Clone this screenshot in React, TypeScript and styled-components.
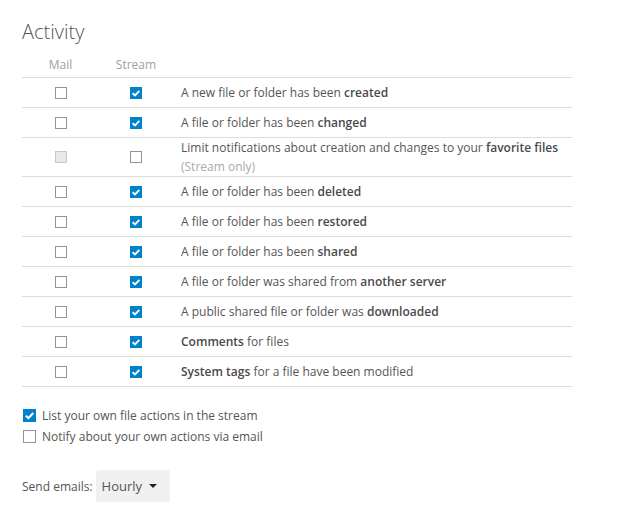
import React from 'react';
import styled, { createGlobalStyle } from 'styled-components';

const GlobalStyle = createGlobalStyle`
  html, body {
    margin: 0;
    padding: 0;
    background: #fff;
  }
  body {
    font-family: 'Open Sans', 'Noto Sans', sans-serif;
    font-size: 12px;
    color: #555;
  }
`;

type Setting = {
  before?: string;
  bold: string;
  after?: string;
  mail: 'off' | 'disabled';
  stream: boolean;
  note?: string;
};

const settings: Setting[] = [
  { before: 'A new file or folder has been ', bold: 'created', mail: 'off', stream: true },
  { before: 'A file or folder has been ', bold: 'changed', mail: 'off', stream: true },
  {
    before: 'Limit notifications about creation and changes to your ',
    bold: 'favorite files',
    mail: 'disabled',
    stream: false,
    note: '(Stream only)',
  },
  { before: 'A file or folder has been ', bold: 'deleted', mail: 'off', stream: true },
  { before: 'A file or folder has been ', bold: 'restored', mail: 'off', stream: true },
  { before: 'A file or folder has been ', bold: 'shared', mail: 'off', stream: true },
  { before: 'A file or folder was shared from ', bold: 'another server', mail: 'off', stream: true },
  { before: 'A public shared file or folder was ', bold: 'downloaded', mail: 'off', stream: true },
  { bold: 'Comments', after: ' for files', mail: 'off', stream: true },
  { bold: 'System tags', after: ' for a file have been modified', mail: 'off', stream: true },
];

const Check: React.FC<{ checked?: boolean; disabled?: boolean; size?: number }> = ({
  checked,
  disabled,
  size = 12,
}) => (
  <Box $checked={checked} $disabled={disabled} $size={size}>
    {checked && (
      <svg width={size - 2} height={size - 2} viewBox="0 0 10 10">
        <path d="M1.6 5.2 L4 7.4 L8.4 2.8" fill="none" stroke="#fff" strokeWidth="1.9" />
      </svg>
    )}
  </Box>
);

const App: React.FC = () => {
  return (
    <>
      <GlobalStyle />
      <Section>
        <Title>Activity</Title>
        <Table>
          <HeadRow>
            <HeadCell>Mail</HeadCell>
            <HeadCell>Stream</HeadCell>
            <span />
          </HeadRow>
          {settings.map((s, i) => (
            <Row key={i}>
              <BoxCell>
                <Check disabled={s.mail === 'disabled'} />
              </BoxCell>
              <BoxCell>
                <Check checked={s.stream} />
              </BoxCell>
              <TextCell $tall={!!s.note}>
                <Line>
                  {s.before}
                  <Strong>{s.bold}</Strong>
                  {s.after}
                </Line>
                {s.note && <Note>{s.note}</Note>}
              </TextCell>
            </Row>
          ))}
        </Table>

        <Options>
          <Option>
            <Check checked size={13} />
            List your own file actions in the stream
          </Option>
          <Option>
            <Check size={13} />
            Notify about your own actions via email
          </Option>
        </Options>

        <SendRow>
          <span>Send emails:</span>
          <Select>
            Hourly
            <Caret />
          </Select>
        </SendRow>
      </Section>
    </>
  );
};

const Section = styled.section`
  padding: 18px 22px 20px;
  width: 550px;
`;

const Title = styled.h2`
  margin: 0 0 11px;
  font-size: 20px;
  line-height: 28px;
  font-weight: 300;
  color: #555;
`;

const Table = styled.div`
  display: flex;
  flex-direction: column;
`;

const HeadRow = styled.div`
  display: grid;
  grid-template-columns: 77px 74px 1fr;
  height: 19px;
  padding-top: 1px;
  align-items: start;
  border-bottom: 1px solid #ddd;
`;

const HeadCell = styled.span`
  text-align: center;
  font-size: 12px;
  line-height: 14px;
  color: #a0a0a0;
`;

const Row = styled.div`
  display: grid;
  grid-template-columns: 77px 74px 1fr;
  align-items: center;
  min-height: 29px;
  border-bottom: 1px solid #ddd;
`;

const BoxCell = styled.div`
  display: flex;
  justify-content: center;
`;

const TextCell = styled.div<{ $tall?: boolean }>`
  padding-left: 8px;
  padding-top: ${(p) => (p.$tall ? '0' : '1px')};
  line-height: ${(p) => (p.$tall ? '19px' : '18px')};
`;

const Line = styled.div`
  white-space: nowrap;
`;

const Strong = styled.strong`
  font-weight: 600;
  color: #4a4a4a;
`;

const Note = styled.div`
  color: #aaa;
  line-height: 19px;
`;

const Box = styled.span<{ $checked?: boolean; $disabled?: boolean; $size: number }>`
  box-sizing: border-box;
  display: inline-flex;
  align-items: center;
  justify-content: center;
  flex: none;
  width: ${(p) => p.$size}px;
  height: ${(p) => p.$size}px;
  border: 1px solid
    ${(p) => (p.$checked ? '#0082c9' : p.$disabled ? '#c8c8c8' : '#949494')};
  background: ${(p) => (p.$checked ? '#0082c9' : p.$disabled ? '#e8e8e8' : '#fff')};
`;

const Options = styled.div`
  display: flex;
  flex-direction: column;
  gap: 2px;
  margin-top: 19px;
`;

const Option = styled.label`
  display: flex;
  align-items: center;
  gap: 6px;
  padding-left: 1px;
  line-height: 19px;
`;

const SendRow = styled.div`
  display: flex;
  align-items: center;
  gap: 3px;
  margin-top: 24px;
`;

const Select = styled.div`
  display: flex;
  align-items: center;
  gap: 7px;
  height: 32px;
  width: 74px;
  box-sizing: border-box;
  padding: 0 6px;
  background: #f0f0f0;
  border-radius: 3px;
  font-size: 13px;
  color: #555;
`;

const Caret = styled.span`
  width: 0;
  height: 0;
  border-left: 4px solid transparent;
  border-right: 4px solid transparent;
  border-top: 4px solid #222;
`;

export default App;
